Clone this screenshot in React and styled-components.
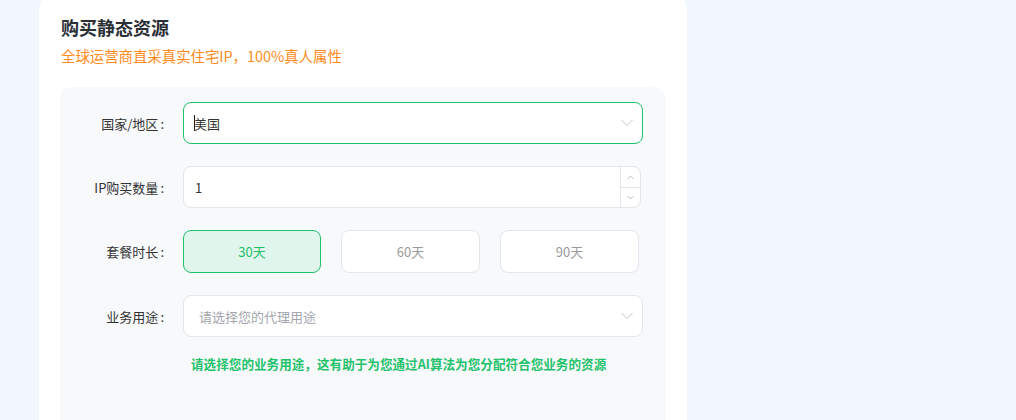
import React from "react";
import styled, { createGlobalStyle } from "styled-components";

const Global = createGlobalStyle`
  html, body { margin: 0; padding: 0; background: #f2f6fe; }
  body { font-family: "Noto Sans CJK SC", "Noto Sans", sans-serif; overflow: hidden; }
  * { box-sizing: border-box; }
`;

const Page = styled.div`
  width: 1016px;
  height: 420px;
  padding: 0 0 0 39px;
  overflow: hidden;
`;

const Card = styled.section`
  width: 648px;
  margin-top: -6px;
  height: 440px;
  background: #fff;
  border-radius: 16px;
  padding: 20px 21px 0 21px;
  display: flex;
  flex-direction: column;
`;

const Title = styled.h2`
  margin: 0 0 0 1px;
  font-size: 18px;
  line-height: 26px;
  font-weight: 700;
  color: #2b2f36;
`;

const Subtitle = styled.p`
  margin: 6px 0 0 1px;
  font-size: 14.4px;
  line-height: 20px;
  color: #ff8a1c;
`;

const Panel = styled.div`
  margin-top: 21px;
  flex: 1;
  background: #f8f9fb;
  border-radius: 12px;
  padding: 15px 22px 0 0;
  display: flex;
  flex-direction: column;
  gap: 22px;
`;

const Row = styled.div`
  display: flex;
  align-items: center;
  gap: 18px;
`;

const Label = styled.label`
  width: 105px;
  padding-right: 1px;
  text-align: right;
  font-size: 13px;
  color: #333;
  white-space: nowrap;
`;

const Colon = styled.span`
  margin-left: 2px;
`;

const Field = styled.div`
  width: ${(p) => p.$w || 460}px;
  height: ${(p) => p.$h || 42}px;
  background: #fff;
  border: 1px solid ${(p) => (p.$active ? "#1fc26b" : "#e3e6ec")};
  border-radius: 8px;
  display: flex;
  align-items: center;
  padding-left: 10px;
  font-size: 13px;
  color: #333;
  position: relative;
  overflow: hidden;
`;

const Value = styled.span`
  flex: 1;
  display: flex;
  align-items: center;
  padding-left: ${(p) => p.$pl || 0}px;
  color: ${(p) => (p.$placeholder ? "#a3a6ad" : "#333")};
`;

const Caret = styled.span`
  display: inline-block;
  width: 1px;
  height: 16px;
  background: #222;
  margin-right: -1px;
`;

const Chevron = styled.svg`
  width: 12px;
  height: 8px;
  margin-right: 9px;
`;

const Spinner = styled.div`
  width: 20px;
  align-self: stretch;
  border-left: 1px solid #e3e6ec;
  display: grid;
  grid-template-rows: 1fr 1fr;
`;

const SpinBtn = styled.div`
  display: flex;
  align-items: center;
  justify-content: center;
  border-top: ${(p) => (p.$bottom ? "1px solid #e3e6ec" : "none")};
`;

const Options = styled.div`
  width: 458px;
  display: grid;
  grid-template-columns: 138px 139px 139px;
  column-gap: 20px;
`;

const Option = styled.button`
  height: 43px;
  border-radius: 8px;
  border: 1px solid ${(p) => (p.$selected ? "#1fc26b" : "#e3e6ec")};
  background: ${(p) => (p.$selected ? "#e0f5ec" : "#fff")};
  color: ${(p) => (p.$selected ? "#1fbf69" : "#999")};
  font-family: inherit;
  font-size: 13px;
  padding: 0;
  cursor: pointer;
`;

const Hint = styled.p`
  margin: -3px 0 0 131px;
  font-size: 12.6px;
  font-weight: 700;
  line-height: 16px;
  color: #1fc26b;
`;

const Down = () => (
  <Chevron viewBox="0 0 12 8">
    <path d="M0.5 1 L6 6.5 L11.5 1" fill="none" stroke="#c0c3c9" strokeWidth="1" />
  </Chevron>
);

const Tiny = ({ up }) => (
  <svg width="7" height="5" viewBox="0 0 7 5">
    <path d={up ? "M0.5 4 L3.5 1 L6.5 4" : "M0.5 1 L3.5 4 L6.5 1"} fill="none" stroke="#b5b8be" strokeWidth="0.9" />
  </svg>
);

export default function App() {
  return (
    <>
      <Global />
      <Page>
        <Card>
          <Title>购买静态资源</Title>
          <Subtitle>全球运营商直采真实住宅IP，100%真人属性</Subtitle>
          <Panel>
            <Row>
              <Label>国家/地区<Colon>:</Colon></Label>
              <Field $active>
                <Value>
                  <Caret />
                  美国
                </Value>
                <Down />
              </Field>
            </Row>
            <Row>
              <Label>IP购买数量<Colon>:</Colon></Label>
              <Field $w={458}>
                <Value $pl={1}>1</Value>
                <Spinner>
                  <SpinBtn>
                    <Tiny up />
                  </SpinBtn>
                  <SpinBtn $bottom>
                    <Tiny />
                  </SpinBtn>
                </Spinner>
              </Field>
            </Row>
            <Row>
              <Label>套餐时长<Colon>:</Colon></Label>
              <Options>
                <Option $selected>30天</Option>
                <Option>60天</Option>
                <Option>90天</Option>
              </Options>
            </Row>
            <Row>
              <Label>业务用途<Colon>:</Colon></Label>
              <Field>
                <Value $placeholder $pl={5}>请选择您的代理用途</Value>
                <Down />
              </Field>
            </Row>
            <Hint>请选择您的业务用途，这有助于为您通过AI算法为您分配符合您业务的资源</Hint>
          </Panel>
        </Card>
      </Page>
    </>
  );
}
